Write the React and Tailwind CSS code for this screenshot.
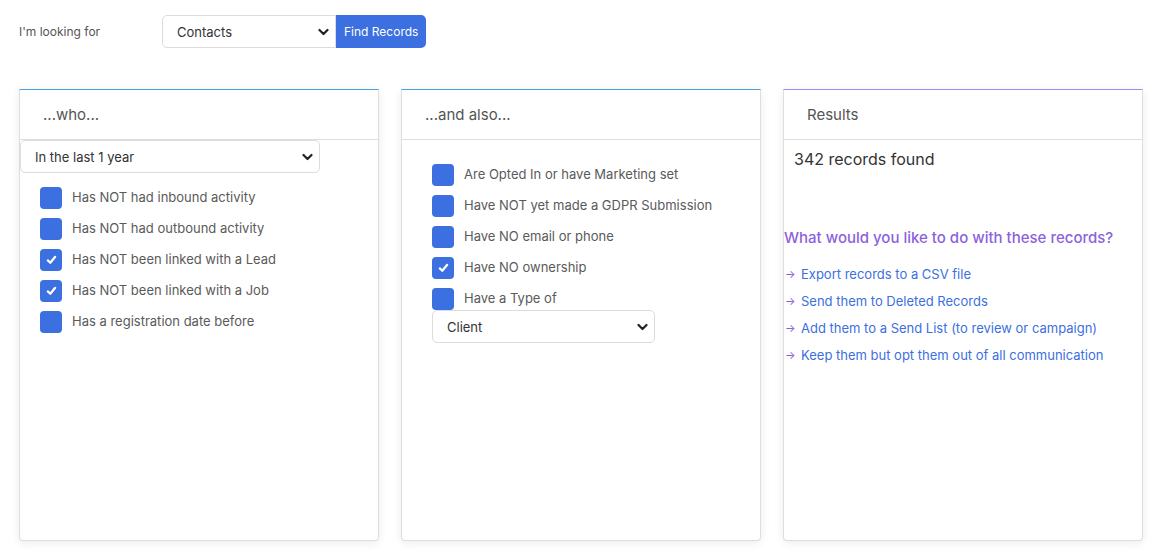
import React from 'react';

const Chevron = () => (
  <svg className="pointer-events-none absolute right-[7px] top-1/2 -translate-y-1/2" width="11" height="8" viewBox="0 0 11 8">
    <path d="M1.5 2 L5.5 6 L9.5 2" fill="none" stroke="#222" strokeWidth="2.2" strokeLinecap="round" strokeLinejoin="round" />
  </svg>
);

const Select = ({ value, className = '' }) => (
  <div className={`relative ${className}`}>
    <select
      defaultValue={value}
      className="h-full w-full appearance-none rounded-[5px] border border-[#dcdcdc] bg-white pl-[14px] pt-[2px] text-[13px] text-[#333] outline-none"
    >
      <option>{value}</option>
    </select>
    <Chevron />
  </div>
);

const Box = ({ checked, label, last }) => (
  <div className={`flex items-start gap-[10px] ${last ? 'h-[22px]' : 'h-[31px]'}`}>
    <div className="flex h-[22px] w-[22px] flex-shrink-0 items-center justify-center rounded-[4px] bg-[#3c6fe0]">
      {checked && (
        <svg width="11" height="10" viewBox="0 0 11 10">
          <path d="M1.8 5.4 L4.3 7.8 L9.2 1.8" fill="none" stroke="white" strokeWidth="2.2" strokeLinecap="round" strokeLinejoin="round" />
        </svg>
      )}
    </div>
    <span className="pt-[1px] text-[13px] leading-[18px] text-[#5a5a5a]">{label}</span>
  </div>
);

const Card = ({ title, accent, children }) => (
  <div className={`flex h-[452px] w-[360px] flex-col rounded-b-[4px] border border-[#dedede] ${accent} bg-white shadow-[0_2px_10px_rgba(0,0,0,0.08)]`}>
    <div className="flex h-[50px] items-center border-b border-[#dedede] px-[23px] pt-[2px] text-[15px] text-[#555]">
      {title}
    </div>
    <div className="flex-1">{children}</div>
  </div>
);

const actions = [
  'Export records to a CSV file',
  'Send them to Deleted Records',
  'Add them to a Send List (to review or campaign)',
  'Keep them but opt them out of all communication',
];

export default function App() {
  return (
    <div className="min-h-[554px] bg-white font-['Inter','Noto_Sans',sans-serif] text-[#333]">
      {/* top search bar */}
      <div className="flex items-center pl-[19px] pt-[15px]">
        <span className="w-[143px] text-[12px] text-[#555]">I'm looking for</span>
        <Select value="Contacts" className="h-[33px] w-[174px] [&_select]:rounded-r-none" />
        <button className="h-[33px] rounded-r-[5px] bg-[#3c6fe0] px-[8px] text-[12px] text-white">
          Find Records
        </button>
      </div>

      <div className="mt-[41px] flex gap-[22px] pl-[19px]">
        <Card title="...who..." accent="border-t-[#4e9fdd]">
          <Select value="In the last 1 year" className="h-[33px] w-[300px]" />
          <div className="pl-[20px] pt-[14px]">
            <Box label="Has NOT had inbound activity" />
            <Box label="Has NOT had outbound activity" />
            <Box checked label="Has NOT been linked with a Lead" />
            <Box checked label="Has NOT been linked with a Job" />
            <Box label="Has a registration date before" />
          </div>
        </Card>

        <Card title="...and also..." accent="border-t-[#4e9fdd]">
          <div className="pl-[30px] pt-[24px]">
            <Box label="Are Opted In or have Marketing set" />
            <Box label="Have NOT yet made a GDPR Submission" />
            <Box label="Have NO email or phone" />
            <Box checked label="Have NO ownership" />
            <Box last label="Have a Type of" />
            <Select value="Client" className="h-[33px] w-[223px]" />
          </div>
        </Card>

        <Card title="Results" accent="border-t-[#a58af0]">
          <div className="pl-[10px] pt-[7px] text-[16px] text-[#333]">342 records found</div>
          <div className="mt-[56px] text-[15px] font-medium text-[#8c62dc]">
            What would you like to do with these records?
          </div>
          <div className="mt-[15px] flex flex-col gap-[9px] pl-[1px]">
            {actions.map((a) => (
              <a key={a} href="#" className="flex items-center text-[13px] leading-[18px] text-[#3c6fe0]">
                <span className="w-[16px] text-[11px] text-[#8c62dc]">→</span>
                {a}
              </a>
            ))}
          </div>
        </Card>
      </div>
    </div>
  );
}
